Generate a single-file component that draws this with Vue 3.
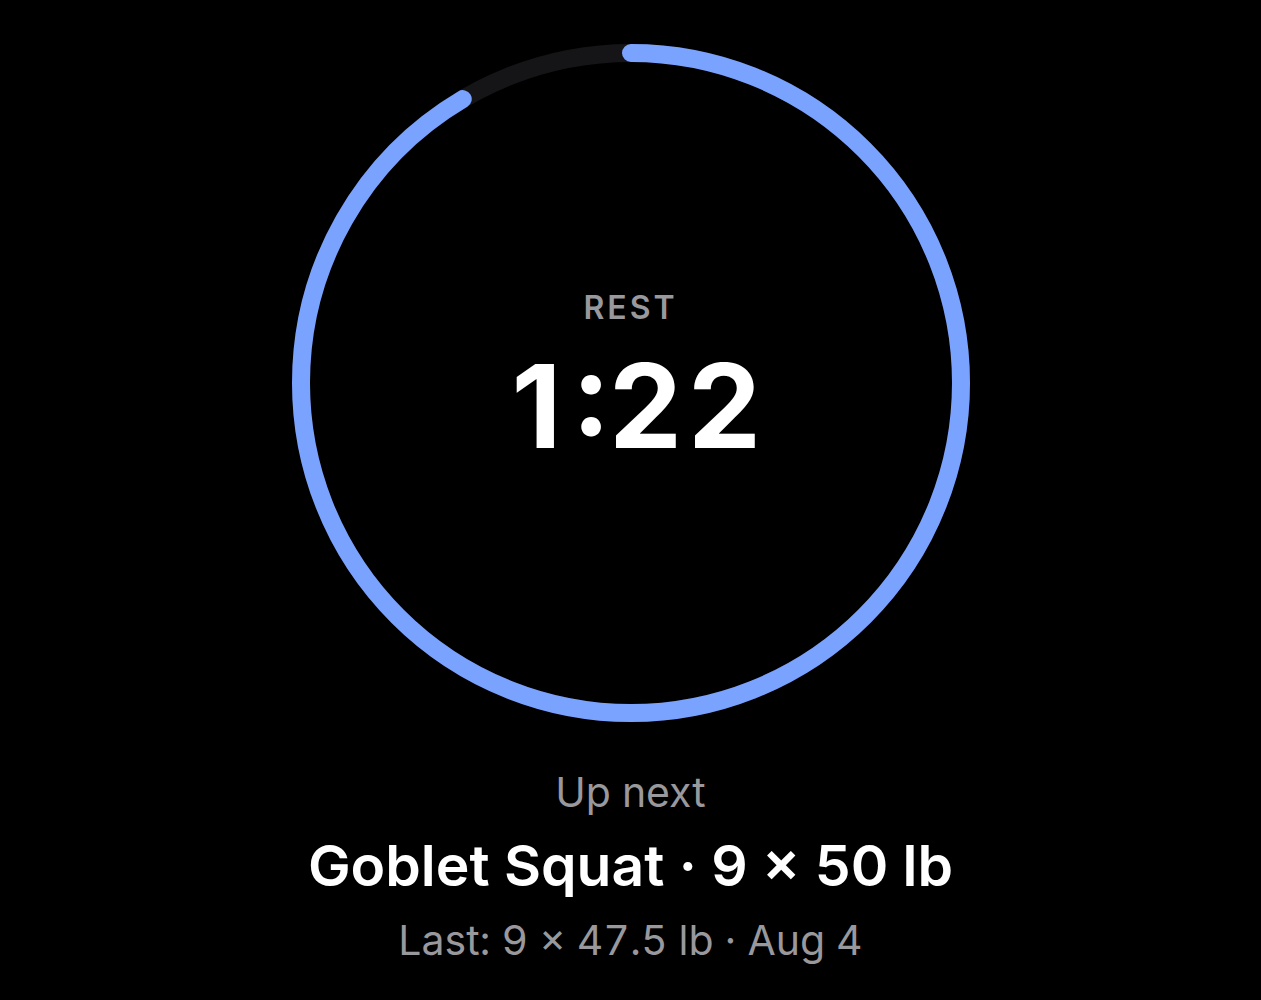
<script setup>
import { computed, ref } from 'vue'

const total = 90
const elapsed = ref(7.7)
const radius = 330
const circumference = 2 * Math.PI * radius

const timeChars = computed(() => {
  const remaining = Math.floor(total - elapsed.value)
  const minutes = Math.floor(remaining / 60)
  const seconds = String(remaining % 60).padStart(2, '0')
  return `${minutes}:${seconds}`.split('')
})

const offset = computed(() => circumference * (elapsed.value / total))
</script>

<template>
  <main class="rest-screen">
    <section class="timer">
      <svg class="timer-ring" viewBox="0 0 678 678" aria-hidden="true">
        <circle class="ring-track" cx="339" cy="339" :r="radius" />
        <circle
          class="ring-progress"
          cx="339"
          cy="339"
          :r="radius"
          :stroke-dasharray="circumference"
          :stroke-dashoffset="offset"
          transform="rotate(-90 339 339)"
        />
      </svg>
      <div class="timer-content">
        <span class="timer-label">REST</span>
        <div class="timer-value" role="timer">
          <span
            v-for="(char, index) in timeChars"
            :key="index"
            :class="char === ':' ? 'colon' : 'digit'"
          >{{ char }}</span>
        </div>
      </div>
    </section>

    <section class="next-set">
      <p class="next-label">Up next</p>
      <h1 class="next-title">Goblet Squat · 9 × 50 lb</h1>
      <p class="next-last">Last: 9 × 47.5 lb · Aug 4</p>
    </section>
  </main>
</template>

<style>
body {
  margin: 0;
  background: #000;
}
</style>

<style scoped>
.rest-screen {
  box-sizing: border-box;
  min-height: 100vh;
  padding: 44px 24px 32px;
  display: flex;
  flex-direction: column;
  align-items: center;
  background: #000;
  color: #fff;
  font-family: Inter, 'Liberation Sans', sans-serif;
}

.timer {
  display: grid;
  place-items: center;
  width: 100%;
  max-width: 678px;
}

.timer-ring,
.timer-content {
  grid-area: 1 / 1;
}

.timer-ring {
  display: block;
  width: 100%;
}

.ring-track,
.ring-progress {
  fill: none;
  stroke-width: 18;
}

.ring-track {
  stroke: #151517;
}

.ring-progress {
  stroke: #7aa2ff;
  stroke-linecap: round;
}

.timer-content {
  display: flex;
  flex-direction: column;
  align-items: center;
  gap: 2px;
  padding-top: 4px;
}

.timer-label {
  font-size: 32px;
  line-height: 40px;
  font-weight: 600;
  letter-spacing: 3px;
  color: #98989d;
}

.timer-value {
  display: flex;
  font-size: 116px;
  line-height: 152px;
  font-weight: 700;
  font-feature-settings: 'case';
}

.digit {
  width: 79px;
  text-align: center;
}

.colon {
  display: flex;
  justify-content: center;
  width: 30px;
}

.next-set {
  margin-top: 46px;
  text-align: center;
}

.next-label,
.next-title,
.next-last {
  margin: 0;
}

.next-label,
.next-last {
  font-size: 41px;
  line-height: 48px;
  font-weight: 400;
  font-variant-numeric: tabular-nums;
  color: #98989d;
}

.next-title {
  margin: 14px 0;
  font-size: 57px;
  line-height: 72px;
  font-weight: 600;
}
</style>
